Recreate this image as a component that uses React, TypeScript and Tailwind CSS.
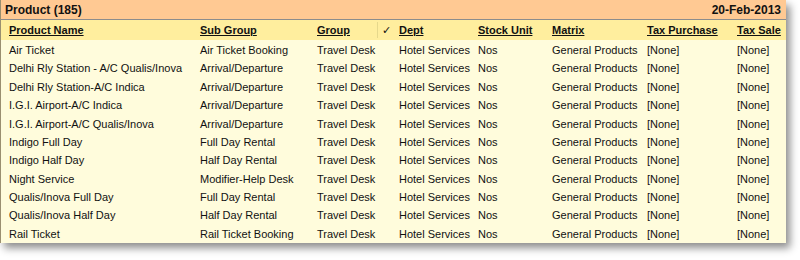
import React from 'react';

const rows = [
  ['Air Ticket', 'Air Ticket Booking'],
  ['Delhi Rly Station - A/C Qualis/Inova', 'Arrival/Departure'],
  ['Delhi Rly Station-A/C Indica', 'Arrival/Departure'],
  ['I.G.I. Airport-A/C Indica', 'Arrival/Departure'],
  ['I.G.I. Airport-A/C Qualis/Inova', 'Arrival/Departure'],
  ['Indigo Full Day', 'Full Day Rental'],
  ['Indigo Half Day', 'Half Day Rental'],
  ['Night Service', 'Modifier-Help Desk'],
  ['Qualis/Inova Full Day', 'Full Day Rental'],
  ['Qualis/Inova Half Day', 'Half Day Rental'],
  ['Rail Ticket', 'Rail Ticket Booking'],
];

const cols = 'grid grid-cols-[191px_117px_82px_79px_74px_95px_90px_1fr] pl-[8px]';

export default function App() {
  return (
    <div className="w-[800px] h-[260px] bg-white font-['Liberation_Sans',Arial,sans-serif] text-[11px] text-[#111]">
      <div className="w-[786px] h-[243px] bg-[#fffcdc] border-l border-[#9a8f70] shadow-[4px_5px_8px_rgba(0,0,0,0.45)]">
        <div className="h-[20px] bg-[#ffc993] border-b border-[#8c8c8c] flex items-center justify-between pl-[4px] pr-[5px] font-bold text-[12px]">
          <span>Product (185)</span>
          <span>20-Feb-2013</span>
        </div>
        <div className={`${cols} h-[20px] items-center bg-[#ffee9e] font-bold`}>
          <span className="underline">Product Name</span>
          <span className="underline">Sub Group</span>
          <span className="flex items-center">
            <span className="underline">Group</span>
            <span className="ml-auto mr-[8px] flex items-center h-[16px] border-l border-[#e6d88c] pl-[4px] font-normal">✓</span>
          </span>
          <span className="underline">Dept</span>
          <span className="underline">Stock Unit</span>
          <span className="underline">Matrix</span>
          <span className="underline">Tax Purchase</span>
          <span className="underline">Tax Sale</span>
        </div>
        <div className="pt-[1px]">
          {rows.map(([name, sub], i) => (
            <div key={i} className={`${cols} h-[18.4px] items-center`}>
              <span>{name}</span>
              <span>{sub}</span>
              <span>Travel Desk</span>
              <span>Hotel Services</span>
              <span>Nos</span>
              <span>General Products</span>
              <span>[None]</span>
              <span>[None]</span>
            </div>
          ))}
        </div>
      </div>
    </div>
  );
}
